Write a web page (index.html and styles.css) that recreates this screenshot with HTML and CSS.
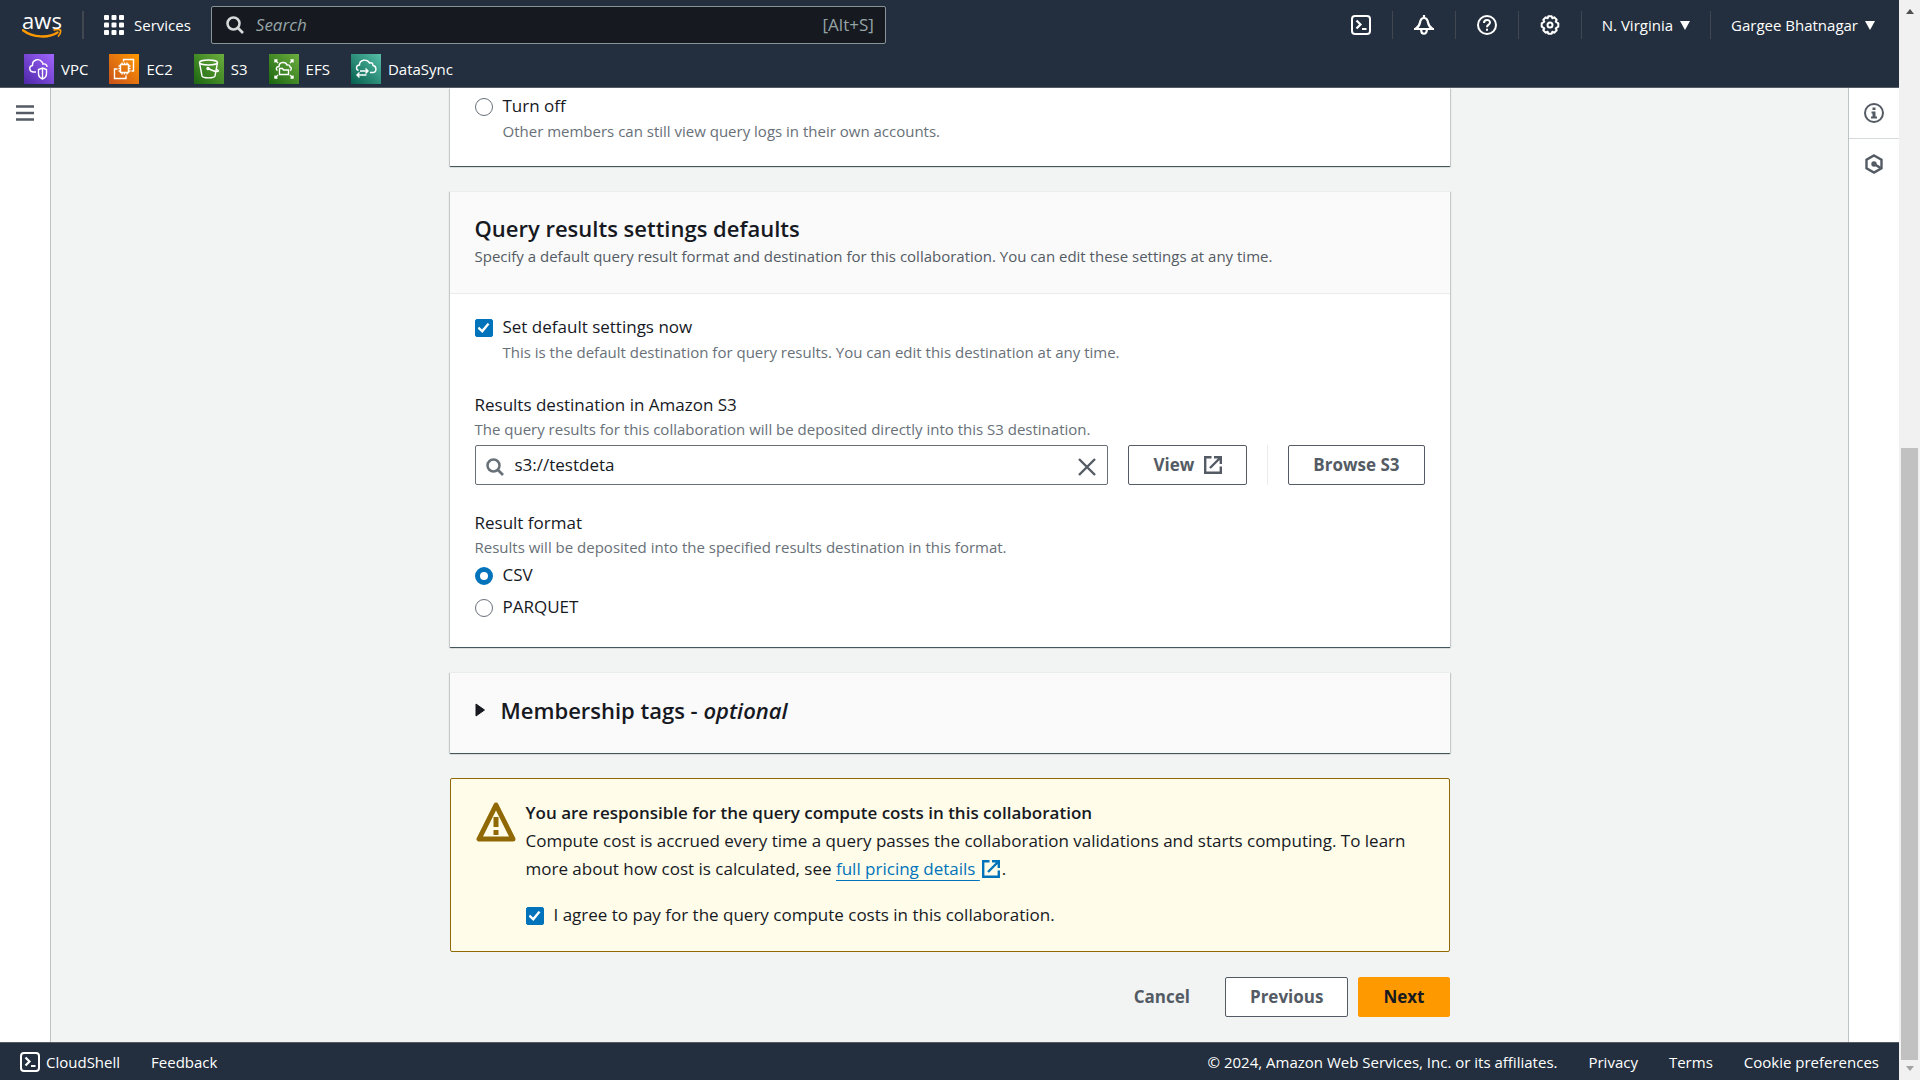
FILE: index.html
```html
<!DOCTYPE html>
<html lang="en">
<head>
    <meta charset="utf-8">
    <title>Create collaboration</title>
    <link rel="stylesheet" href="styles.css">
</head>
<body>
    <!-- shared shapes -->
    <svg class="sprite" aria-hidden="true">
        <symbol id="shell" viewBox="0 0 20 20"><rect x="1" y="1" width="18" height="18" rx="3" fill="none" stroke="currentColor" stroke-width="2"/><path d="M5.500 5.500l4 4-4 4M11 14h4.500" fill="none" stroke="currentColor" stroke-width="2.200"/></symbol>
        <symbol id="external" viewBox="0 0 18 18"><path d="M7.500 1.200H1.200v15.600h15.600v-6.300M10 1.200h6.800v6.800M16.500 1.500L6 12" fill="none" stroke="currentColor" stroke-width="2.400"/></symbol>
        <symbol id="search" viewBox="0 0 18 18"><circle cx="7.500" cy="7.500" r="6" fill="none" stroke="currentColor" stroke-width="2.500"/><path d="M12 12l5 5" stroke="currentColor" stroke-width="2.700"/></symbol>
    </svg>

    <div class="app">
        <header class="topnav">
            <div class="topnav-row">
                <a class="logo" href="#" aria-label="aws">
                    <span>aws</span>
                    <svg width="40" height="10" viewBox="0 0 40 10"><path d="M1 1.200c10 7.800 26 8 34.500 2.300" fill="none" stroke="#ff9900" stroke-width="2.400" stroke-linecap="round"/><path d="M31.500 1.200c3-1 6-1 7 0 .4 2-.5 4.500-2.500 6.300" fill="none" stroke="#ff9900" stroke-width="1.700"/></svg>
                </a>
                <button class="services">
                    <svg width="20" height="20" viewBox="0 0 20 20" fill="#fff"><rect width="5" height="5" rx="1"/><rect x="7.500" width="5" height="5" rx="1"/><rect x="15" width="5" height="5" rx="1"/><rect y="7.500" width="5" height="5" rx="1"/><rect x="7.500" y="7.500" width="5" height="5" rx="1"/><rect x="15" y="7.500" width="5" height="5" rx="1"/><rect y="15" width="5" height="5" rx="1"/><rect x="7.500" y="15" width="5" height="5" rx="1"/><rect x="15" y="15" width="5" height="5" rx="1"/></svg>
                    Services
                </button>
                <label class="search">
                    <svg width="18" height="18"><use href="#search"/></svg>
                    <input type="search" placeholder="Search" aria-label="Search">
                    <span>[Alt+S]</span>
                </label>
                <nav class="tools">
                    <button aria-label="CloudShell"><svg width="20" height="20"><use href="#shell"/></svg></button>
                    <button aria-label="Notifications"><svg width="20" height="20" viewBox="0 0 20 20" fill="none" stroke="currentColor" stroke-width="2.200"><path d="M1.500 14C4.800 11.800 5.500 10.500 6 7.500 6.500 4.500 7.800 3 10 3s3.500 1.500 4 4.500c.5 3 1.200 4.300 4.500 6.500M0 14h20M10 0v3M7.200 15c0 5 5.600 5 5.600 0"/></svg></button>
                    <button aria-label="Help"><svg width="20" height="20" viewBox="0 0 20 20" fill="none" stroke="currentColor" stroke-width="2"><circle cx="10" cy="10" r="9"/><path d="M7 8c0-4 6-4 6-.5C13 9.800 10 9.500 10 12.300M10 13.700v2"/></svg></button>
                    <button aria-label="Settings"><svg width="20" height="20" viewBox="0 0 20 20" fill="none" stroke="currentColor" stroke-width="2" stroke-linejoin="round"><path d="M8.300 1.200h3.400l.6 2.100 1.900-1 2.500 2.500-1 1.900 2.600 1.600v3.400l-2.600 1.600 1 1.900-2.500 2.500-1.900-1-.6 2.100H8.300l-.6-2.100-1.900 1-2.500-2.500 1-1.900-2.600-1.600V8.300l2.600-1.600-1-1.900 2.500-2.500 1.900 1z"/><circle cx="10" cy="10" r="2.500"/></svg></button>
                    <button class="menu">N. Virginia <svg width="10" height="9" viewBox="0 0 10 9"><path d="M0 0h10L5 9z" fill="currentColor"/></svg></button>
                    <button class="menu">Gargee Bhatnagar <svg width="10" height="9" viewBox="0 0 10 9"><path d="M0 0h10L5 9z" fill="currentColor"/></svg></button>
                </nav>
            </div>
            <nav class="favorites">
                <a href="#"><svg class="vpc" width="30" height="30" viewBox="0 0 30 30"><path d="M12 18H9c-4-.5-4.500-6-.5-6.500C8 6 15 3.500 18 8c1 1 1 2 1 2 2-.5 4 .5 4 3M18.500 14l4 1.500v4c0 3-1.500 4.500-4 5.500-2.500-1-4-2.500-4-5.500v-4zM18.500 14v11"/></svg>VPC</a>
                <a href="#"><svg class="ec2" width="30" height="30" viewBox="0 0 30 30"><path d="M11.500 10.500h8v8h-8zM13 8.500v2M15.500 8.500v2M18 8.500v2M13 18.500v2M15.500 18.500v2M18 18.500v2M9.500 12h2M9.500 14.500h2M9.500 17h2M19.500 12h2M19.500 14.500h2M19.500 17h2M14.500 7.500v-2h10V17H22.500M8.500 15h-3v9.500H17V21.500"/></svg>EC2</a>
                <a href="#"><svg class="s3" width="30" height="30" viewBox="0 0 30 30"><ellipse cx="14.500" cy="8.500" rx="9" ry="2.500"/><path d="M5.500 8.500L8 22c1 2.500 12 2.500 13 0l2.500-13.500M14 14.500c4 2 9 4 10.500 2.500 0-1-1.500-1.500-3-2"/><circle cx="14" cy="14.500" r="1"/></svg>S3</a>
                <a href="#"><svg class="s3" width="30" height="30" viewBox="0 0 30 30"><path d="M6 8.500V6h2.500M6 6l3 3M21.500 6H24v2.500M24 6l-3 3M6 21.500V24h2.500M6 24l3-3M21.500 24H24v-2.500M24 24l-3-3M10.500 20.500v-6h3l1 1.500h5v4.500zM8.500 16.500c-2-1-1.500-4 1.500-4 0-5 7-5 8-1.500 2-.5 3 .5 3 2 2 .5 1.500 3 0 3.500"/></svg>EFS</a>
                <a href="#"><svg class="sync" width="30" height="30" viewBox="0 0 30 30"><path d="M7.500 16.500c-3-1-2.500-5.500 1-5.500C8.500 5.500 16 4.500 18.500 9c2.500-1 3.500.5 3.500 2.500 4 .5 4 7-.5 7H19M9 17h7.500M14.500 14.500L17 17l-2.500 2.500M15.500 21H6M8.500 18.500L6 21l2.500 2.500"/></svg>DataSync</a>
            </nav>
        </header>

        <div class="body">
            <aside class="rail rail-left">
                <button aria-label="Open navigation"><svg width="18" height="16" viewBox="0 0 18 16"><path d="M0 1.500h18M0 8h18M0 14.500h18" stroke="currentColor" stroke-width="2.500"/></svg></button>
            </aside>

            <main class="content">
                <section class="card card-cut">
                    <div class="choice">
                        <input type="radio" id="logs-off" name="logs">
                        <label for="logs-off">Turn off</label>
                        <p class="hint">Other members can still view query logs in their own accounts.</p>
                    </div>
                </section>

                <section class="card">
                    <div class="card-header">
                        <h2>Query results settings defaults</h2>
                        <p class="hint dark">Specify a default query result format and destination for this collaboration. You can edit these settings at any time.</p>
                    </div>
                    <div class="card-body">
                        <div class="choice">
                            <input type="checkbox" id="defaults" checked>
                            <label for="defaults">Set default settings now</label>
                            <p class="hint">This is the default destination for query results. You can edit this destination at any time.</p>
                        </div>
                        <div class="field">
                            <label for="destination">Results destination in Amazon S3</label>
                            <p class="hint">The query results for this collaboration will be deposited directly into this S3 destination.</p>
                            <div class="destination">
                                <div class="uri">
                                    <svg width="18" height="18"><use href="#search"/></svg>
                                    <input type="text" id="destination" value="s3://testdeta">
                                    <button aria-label="Clear"><svg width="18" height="18" viewBox="0 0 18 18"><path d="M1 1l16 16M17 1L1 17" stroke="currentColor" stroke-width="2.400"/></svg></button>
                                </div>
                                <button class="btn">View <svg width="18" height="18"><use href="#external"/></svg></button>
                                <div class="browse"><button class="btn">Browse S3</button></div>
                            </div>
                        </div>
                        <fieldset class="field">
                            <legend>Result format</legend>
                            <p class="hint">Results will be deposited into the specified results destination in this format.</p>
                            <div class="choice">
                                <input type="radio" id="csv" name="format" checked>
                                <label for="csv">CSV</label>
                            </div>
                            <div class="choice">
                                <input type="radio" id="parquet" name="format">
                                <label for="parquet">PARQUET</label>
                            </div>
                        </fieldset>
                    </div>
                </section>

                <section class="card">
                    <button class="expander">
                        <svg width="10" height="14" viewBox="0 0 10 14"><path d="M1 1v12l8.500-6z" fill="currentColor" stroke="currentColor" stroke-linejoin="round"/></svg>
                        <span>Membership tags - <em>optional</em></span>
                    </button>
                </section>

                <section class="alert">
                    <svg width="40" height="40" viewBox="0 0 40 40"><path d="M20 3L3 37h34z" fill="none" stroke="#906806" stroke-width="5" stroke-linejoin="round"/><path d="M20 15v10M20 28v5" stroke="#906806" stroke-width="5"/></svg>
                    <div>
                        <h3>You are responsible for the query compute costs in this collaboration</h3>
                        <p>Compute cost is accrued every time a query passes the collaboration validations and starts computing. To learn more about how cost is calculated, see <a href="#">full pricing details </a><svg class="link-icon" width="18" height="18"><use href="#external"/></svg>.</p>
                        <div class="choice">
                            <input type="checkbox" id="agree" checked>
                            <label for="agree">I agree to pay for the query compute costs in this collaboration.</label>
                        </div>
                    </div>
                </section>

                <div class="actions">
                    <button class="btn btn-link">Cancel</button>
                    <button class="btn">Previous</button>
                    <button class="btn btn-primary">Next</button>
                </div>
            </main>

            <aside class="rail rail-right">
                <button aria-label="Info"><svg width="20" height="20" viewBox="0 0 20 20"><circle cx="10" cy="10" r="9" fill="none" stroke="currentColor" stroke-width="2"/><path d="M8.500 4.500h3v2.500h-3zM7.500 8.500h4v5H13v2H7v-2h1.500v-3h-1z" fill="currentColor"/></svg></button>
                <button aria-label="Tutorials"><svg width="20" height="20" viewBox="0 0 20 20"><path d="M10 1.500l7.500 4.200v8.600L10 18.500l-7.500-4.200V5.700z" fill="none" stroke="currentColor" stroke-width="2.400"/><circle cx="10" cy="10" r="2.700" fill="currentColor"/><path d="M10 10l6.500 3.800" stroke="currentColor" stroke-width="2.500"/></svg></button>
            </aside>
        </div>

        <footer class="footer">
            <button><svg width="20" height="20"><use href="#shell"/></svg>CloudShell</button>
            <a href="#">Feedback</a>
            <span class="copyright">© 2024, Amazon Web Services, Inc. or its affiliates.</span>
            <a href="#">Privacy</a>
            <a href="#">Terms</a>
            <a href="#">Cookie preferences</a>
        </footer>
    </div>

    <div class="scrollbar" aria-hidden="true">
        <i class="arrow-up"></i>
        <div class="track"><div class="thumb"></div></div>
        <i class="arrow-down"></i>
    </div>
</body>
</html>
```
FILE: styles.css
```css
* {
    box-sizing: border-box;
}

body {
    margin: 0;
    min-height: 100vh;
    display: flex;
    background: #f2f3f3;
    color: #16191f;
    font-family: "Open Sans", "Noto Sans", sans-serif;
    font-size: 17px;
    line-height: 28px;
}

h2, h3, p {
    margin: 0;
}

svg {
    display: block;
    flex: none;
}

button {
    font: inherit;
    color: inherit;
    background: none;
    border: 0;
    padding: 0;
    cursor: pointer;
}

.sprite {
    position: absolute;
    width: 0;
    height: 0;
}

.app {
    flex: 1;
    min-width: 0;
    display: flex;
    flex-direction: column;
}

/* top navigation */
.topnav {
    height: 88px;
    background: #232f3e;
    border-bottom: 1px solid #545b64;
    color: #fff;
    font-size: 15px;
    font-weight: 500;
}

.topnav-row {
    display: flex;
    align-items: center;
    height: 50px;
    padding: 0 7px 0 22px;
}

.logo {
    width: 40px;
    color: #fff;
    text-decoration: none;
    text-align: center;
}

.logo span {
    display: block;
    font-size: 22px;
    line-height: 18px;
}

.services {
    display: flex;
    align-items: center;
    gap: 10px;
    height: 28px;
    margin: 0 20px;
    padding-left: 20px;
    border-left: 2px solid #414750;
}

.search {
    display: flex;
    align-items: center;
    gap: 12px;
    width: 675px;
    height: 38px;
    padding: 0 11px 0 14px;
    background: #161920;
    border: 1px solid #879596;
    border-radius: 2px;
    color: #d5dbdb;
    font-size: 17px;
    font-weight: 400;
}

.search input {
    flex: 1;
    font: inherit;
    background: none;
    border: 0;
    outline: 0;
    padding: 0;
    color: #fff;
}

.search input::placeholder {
    color: #95a5a6;
    font-style: italic;
}

.search span {
    color: #95a5a6;
}

.tools {
    display: flex;
    align-items: center;
    margin-left: auto;
}

.tools button {
    display: flex;
    align-items: center;
    gap: 7px;
    height: 28px;
    padding: 0 21px;
    border-left: 1px solid #414750;
}

.tools button:first-child {
    border: 0;
}

.tools .menu {
    padding: 0 20px;
}

.tools .menu:last-child {
    padding-right: 17px;
}

.favorites {
    display: flex;
    gap: 21px;
    padding: 4px 24px;
}

.favorites a {
    display: flex;
    align-items: center;
    gap: 7px;
    color: #fff;
    text-decoration: none;
}

.favorites svg {
    fill: none;
    stroke: #fff;
    stroke-width: 1.4;
}

.vpc { background: linear-gradient(45deg, #4d27a8, #a166ff); }
.ec2 { background: linear-gradient(45deg, #c8511b, #ff9900); }
.s3 { background: linear-gradient(45deg, #1b660f, #6cae3e); }
.sync { background: linear-gradient(45deg, #055f4e, #56c0a7); }

/* page body */
.body {
    flex: 1;
    display: flex;
}

.rail {
    width: 51px;
    background: #fff;
    color: #545b64;
}

.rail button {
    display: flex;
    align-items: center;
    justify-content: center;
    width: 50px;
    height: 50px;
}

.rail-left {
    border-right: 1px solid #bec4c6;
}

.rail-right {
    border-left: 1px solid #bec4c6;
}

.rail-right button + button {
    border-top: 1px solid #d5dbdb;
}

.content {
    flex: 1;
    display: flex;
    flex-direction: column;
    gap: 25px;
    max-width: 1002px;
    margin: 0 auto;
    padding: 0 1px 25px;
}

.card {
    background: #fff;
    border-top: 1px solid #eaeded;
    box-shadow: 0 1px 1px #001c244d, 1px 1px 1px #001c2426, -1px 1px 1px #001c2426, 0 1px 0 #879596;
}

.card-cut {
    border-top: 0;
    padding: 4px 25px 24px;
}

.card-header {
    padding: 20px 25px 24px;
    background: #fafafa;
    border-bottom: 1px solid #eaeded;
}

.card-header h2, .expander {
    font-size: 22px;
    font-weight: 600;
    line-height: 32px;
}

.card-body {
    padding: 19px 25px 24px;
}

.hint {
    color: #687078;
    font-size: 15px;
    line-height: 25px;
}

.hint.dark {
    color: #545b64;
}

.choice {
    display: grid;
    grid-template-columns: 18px 1fr;
    column-gap: 10px;
    align-items: center;
}

.choice .hint {
    grid-column: 2;
    line-height: 22px;
}

.choice input {
    appearance: none;
    width: 18px;
    height: 18px;
    margin: 2px 0 0;
    background: #fff;
    border: 1px solid #687078;
    border-radius: 2px;
}

.choice input[type="radio"] {
    border-radius: 50%;
}

.choice input[type="radio"]:checked {
    border: 5px solid #0073bb;
}

.choice input[type="checkbox"]:checked {
    border-color: #0073bb;
    background: #0073bb;
    display: grid;
    place-items: center;
}

.choice input[type="checkbox"]:checked::before {
    content: "";
    width: 12px;
    height: 10px;
    background: #fff;
    clip-path: polygon(0 55%, 14% 38%, 38% 65%, 84% 0, 100% 12%, 41% 100%);
}

.field {
    margin: 28px 0 0;
    padding: 0;
    border: 0;
}

fieldset.field {
    margin-top: 24px;
}

.field legend {
    padding: 0;
}

.field > label {
    display: block;
    line-height: 28px;
}

.field > .hint {
    line-height: 20px;
}

.field .choice {
    min-height: 32px;
}

.field .hint + .choice {
    margin-top: 2px;
}

.destination {
    display: flex;
    gap: 20px;
    margin-top: 6px;
}

.uri {
    flex: 1;
    display: flex;
    align-items: center;
    gap: 11px;
    height: 40px;
    padding: 0 11px 0 10px;
    border: 1px solid #687078;
    border-radius: 2px;
    color: #687078;
}

.uri svg {
    margin-top: 4px;
}

.uri input {
    flex: 1;
    font: inherit;
    color: #16191f;
    border: 0;
    outline: 0;
    padding: 0;
}

.uri button {
    color: #545b64;
}

.browse {
    padding-left: 20px;
    border-left: 1px solid #eaeded;
}

.btn {
    display: flex;
    align-items: center;
    gap: 10px;
    height: 40px;
    padding: 0 24px;
    background: #fff;
    border: 1px solid #545b64;
    border-radius: 2px;
    color: #545b64;
    font-weight: 700;
}

.btn-link {
    background: none;
    border-color: transparent;
}

.btn-primary {
    background: #ff9900;
    border-color: #ff9900;
    color: #16191f;
}

.expander {
    display: flex;
    align-items: center;
    gap: 16px;
    width: 100%;
    height: 80px;
    padding: 0 25px 6px;
    background: #fafafa;
}

/* cost warning */
.alert {
    display: flex;
    gap: 10px;
    padding: 20px 25px;
    background: #fffce9;
    border: 1px solid #906806;
    border-radius: 2px;
}

.alert > svg {
    margin-top: 3px;
}

.alert h3 {
    font-size: 17px;
    font-weight: 600;
}

.alert a {
    color: #0073bb;
    text-decoration: underline;
    text-underline-offset: 5px;
}

.link-icon {
    display: inline-block;
    margin: 0 2px;
    vertical-align: -3px;
    color: #0073bb;
}

.alert .choice {
    margin: 18px 0 2px;
}

.actions {
    display: flex;
    justify-content: flex-end;
    gap: 10px;
}

.footer {
    display: flex;
    align-items: center;
    gap: 31px;
    height: 38px;
    padding: 0 20px;
    background: #232f3e;
    border-top: 1px solid #545b64;
    color: #fff;
    font-size: 15px;
    font-weight: 500;
}

.footer button {
    display: flex;
    align-items: center;
    gap: 6px;
}

.footer a {
    color: #fff;
    text-decoration: none;
}

.copyright {
    margin-left: auto;
}

/* page scrollbar */
.scrollbar {
    display: flex;
    flex-direction: column;
    align-items: center;
    justify-content: space-between;
    width: 21px;
    padding: 9px 0;
    background: #f1f1f1;
}

.track {
    flex: 1;
    display: flex;
    align-items: flex-end;
    padding-bottom: 6px;
}

.thumb {
    width: 17px;
    height: calc(59% - 5px);
    background: #c1c1c1;
}

.arrow-up, .arrow-down {
    border: 4px solid transparent;
}

.arrow-up {
    border-top: 0;
    border-bottom: 5px solid #505050;
}

.arrow-down {
    border-bottom: 0;
    border-top: 5px solid #a3a3a3;
}
```
